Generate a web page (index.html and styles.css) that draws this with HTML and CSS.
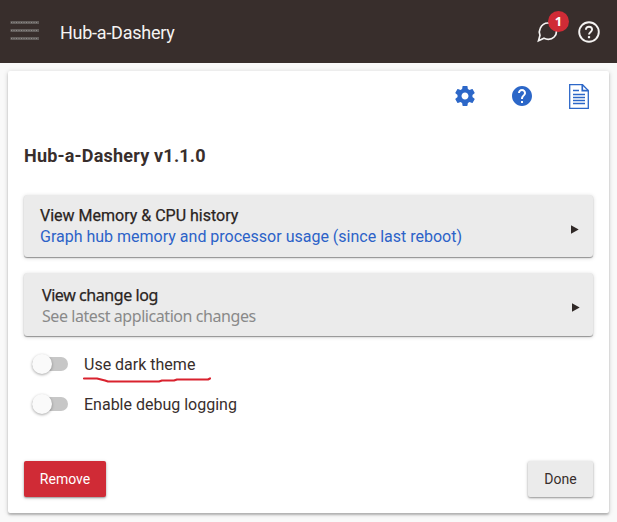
FILE: index.html
```html
<!DOCTYPE html>
<html lang="en">
<head>
<meta charset="utf-8">
<title>Hub-a-Dashery</title>
<link rel="stylesheet" href="styles.css">
</head>
<body>
<header class="topbar">
  <svg class="menu" width="30" height="22" viewBox="0 0 30 22">
    <g stroke="#625d5b" stroke-width="3"><path d="M0.5 2.5H29M0.5 10.5H29M0.5 18.5H29"/></g>
    <g stroke="#8f8b89" stroke-width="1" stroke-dasharray="1 1.5"><path d="M1 2.5H28M1 10.5H28M1 18.5H28"/></g>
  </svg>
  <span class="brand">Hub-a-Dashery</span>
  <div class="alerts">
    <svg width="22" height="22" viewBox="0 0 22 22" fill="none" stroke="#f5f3f2" stroke-width="1.7" stroke-linejoin="miter"><path d="M1.500 19.800L3 14.300C2 12 2.100 9.500 3.200 7.300C4.700 4 7.700 2 11 2C16 2 19.500 5.800 19.500 10.200C19.500 14.900 16 18.300 11.200 18.300C9.600 18.300 8.200 17.900 7 17.300Z"/></svg>
    <span class="badge">1</span>
  </div>
  <svg class="help" width="22" height="22" viewBox="0 0 22 22" fill="none" stroke="#f5f3f2" stroke-width="1.9"><circle cx="11" cy="11" r="9.800"/><path d="M7.900 8.800C7.900 6.900 9.200 5.700 11 5.700S14.100 6.900 14.100 8.600C14.100 10.900 11 11 11 13.600"/><path d="M11 15.100V17.200" stroke-width="2.200"/></svg>
</header>
<main class="panel">
  <nav class="tools">
    <svg width="24" height="24" viewBox="0 0 24 24" fill="#2c67c8"><path d="M19.430 12.980c.04-.32.07-.64.07-.98s-.03-.66-.07-.98l2.110-1.650c.19-.15.24-.42.12-.64l-2-3.460c-.12-.22-.39-.3-.61-.22l-2.490 1c-.52-.4-1.080-.73-1.690-.98l-.38-2.650C14.460 2.180 14.250 2 14 2h-4c-.25 0-.46.18-.49.42l-.38 2.650c-.61.25-1.170.59-1.690.98l-2.490-1c-.23-.09-.49 0-.61.22l-2 3.460c-.13.22-.07.49.12.64l2.110 1.650c-.04.32-.07.65-.07.98s.03.66.07.98l-2.110 1.650c-.19.15-.24.42-.12.64l2 3.460c.12.22.39.3.61.22l2.490-1c.52.4 1.080.73 1.690.98l.38 2.650c.03.24.24.42.49.42h4c.25 0 .46-.18.49-.42l.38-2.650c.61-.25 1.170-.59 1.690-.98l2.490 1c.23.09.49 0 .61-.22l2-3.460c.12-.22.07-.49-.12-.64l-2.110-1.650zM12 15.500c-1.930 0-3.500-1.570-3.500-3.500s1.570-3.500 3.500-3.500 3.500 1.570 3.500 3.500-1.570 3.500-3.500 3.500z"/></svg>
    <svg width="24" height="24" viewBox="0 0 24 24" fill="#2c67c8"><path d="M12 2C6.480 2 2 6.480 2 12s4.480 10 10 10 10-4.480 10-10S17.520 2 12 2zm1 17h-2v-2h2v2zm2.070-7.750l-.9.920C13.450 12.900 13 13.500 13 15h-2v-.5c0-1.100.45-2.100 1.170-2.830l1.240-1.260c.37-.36.59-.86.59-1.410 0-1.100-.9-2-2-2s-2 .9-2 2H8c0-2.210 1.790-4 4-4s4 1.790 4 4c0 .88-.36 1.680-.93 2.250z"/></svg>
    <svg class="doc" width="20" height="25" viewBox="0 0 20 25" fill="none" stroke="#2c67c8" stroke-width="1.300"><path d="M.7.700H13.500L19.300 6.500V24.300H.7Z"/><path d="M13.300.7V6.700H19.300" stroke-width="1.700"/><path d="M4 6.500H10M4 10.500H16M4 13.500H16M4 16.500H16M4 19.500H16"/></svg>
  </nav>
  <h1 class="title">Hub-a-Dashery v1.1.0</h1>
  <a class="link first">
    <span class="copy"><span class="name">View Memory &amp; CPU history</span><span class="note">Graph hub memory and processor usage (since last reboot)</span></span>
    <svg class="arrow" width="8" height="9" viewBox="0 0 8 9"><path d="M0 .2L7.700 4.500L0 8.800Z"/></svg>
  </a>
  <a class="link second">
    <span class="copy"><span class="name">View change log</span><span class="note">See latest application changes</span></span>
    <svg class="arrow" width="8" height="9" viewBox="0 0 8 9"><path d="M0 .2L7.700 4.500L0 8.800Z"/></svg>
  </a>
  <div class="options">
    <label class="option"><span class="track"><span class="knob"></span></span><span class="label">Use dark theme<svg class="mark" width="132" height="8" viewBox="0 0 132 8" fill="none" stroke="#d9222e" stroke-width="2.200" stroke-linecap="round" stroke-linejoin="round"><path d="M3 2.500H16L24 4.500L27 5.500H78L81 4.500H93L96 3.500H127L129 2.500"/></svg></span></label>
    <label class="option"><span class="track"><span class="knob"></span></span><span class="label">Enable debug logging</span></label>
  </div>
  <footer class="actions"><button class="btn remove">Remove</button><button class="btn done">Done</button></footer>
</main>
</body>
</html>
```
FILE: styles.css
```css
* { box-sizing: border-box; }
body {
  margin: 0;
  height: 522px;
  overflow: hidden;
  background: #f9f9f9;
  color: #382e2c;
  font: 16px/21px Roboto, sans-serif;
}
svg { display: block; flex: none; }
.topbar {
  height: 63px;
  padding: 0 17px 0 10px;
  display: flex;
  align-items: center;
  background: #382e2c;
  color: #f5f3f2;
}
.menu { margin-bottom: 1px; }
.brand { margin-left: 20px; padding-top: 1px; font-size: 18px; letter-spacing: -.25px; }
.alerts { position: relative; margin-left: auto; }
.badge {
  position: absolute;
  left: 11px;
  top: -10px;
  width: 21px;
  height: 21px;
  border-radius: 50%;
  background: #d02b36;
  color: #fff;
  font: 700 13px/20px "Open Sans", sans-serif;
  text-align: center;
}
.help { margin-left: 19px; }
.panel {
  height: 442px;
  margin: 8px 8px 0;
  padding: 12px 16px 16px;
  display: flex;
  flex-direction: column;
  border-radius: 2px;
  background: #fff;
  box-shadow: 0 2px 2px rgba(0,0,0,.2), 0 1px 5px rgba(0,0,0,.18);
}
.tools {
  height: 26px;
  padding-right: 4px;
  display: flex;
  justify-content: flex-end;
  align-items: center;
  gap: 33px;
}
.doc { margin-left: 2px; }
.title { margin: 35px 0 27px; font-size: 18px; line-height: 24px; font-weight: 700; letter-spacing: .19px; }
.link {
  height: 62px;
  flex: none;
  padding: 0 14px 0 16px;
  display: flex;
  align-items: center;
  justify-content: space-between;
  border-radius: 3px;
  background: #ebebeb;
  box-shadow: 0 1px 1px rgba(0,0,0,.36), 0 1px 4px rgba(0,0,0,.18);
}
.copy { display: flex; flex-direction: column; }
.name { color: #292321; -webkit-text-stroke: .25px #292321; }
.first .note { color: #2c62c8; }
.second { height: 63px; margin-top: 16px; padding-left: 18px; padding-right: 13px; }
.second .copy { padding-top: 2px; font-family: "Noto Sans", sans-serif; letter-spacing: -.43px; }
.second .note { color: #898989; }
.arrow { margin-top: 6px; fill: #302927; }
.options { margin-top: 8px; display: flex; flex-direction: column; }
.option { height: 40px; display: flex; align-items: center; }
.track {
  position: relative;
  width: 36px;
  height: 14px;
  margin-left: 8px;
  border-radius: 7px;
  background: #c7c7c7;
}
.knob {
  position: absolute;
  left: 0;
  top: -3px;
  width: 20px;
  height: 20px;
  border-radius: 50%;
  background: #fafafa;
  box-shadow: 0 1px 3px rgba(0,0,0,.35);
}
.label { position: relative; margin-left: 16px; }
.mark { position: absolute; left: -3px; top: 22px; }
.actions { margin-top: auto; display: flex; justify-content: space-between; }
.btn {
  height: 36px;
  padding: 0;
  border: 0;
  border-radius: 2px;
  font: 14px Roboto, sans-serif;
  box-shadow: 0 1px 2px rgba(0,0,0,.35), 0 1px 4px rgba(0,0,0,.14);
}
.remove { width: 82px; background: #d02b36; color: #fff; }
.done { width: 65px; background: #ebebeb; color: #382e2c; }
```
